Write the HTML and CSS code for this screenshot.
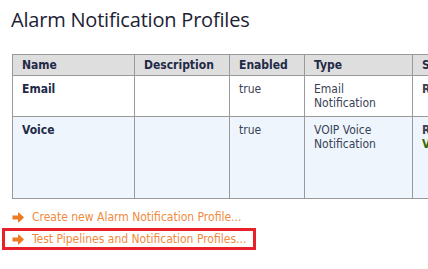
FILE: index.html
```html
<!DOCTYPE html>
<html>
<head>
<meta charset="utf-8">
<link rel="stylesheet" href="styles.css">
</head>
<body>
<h1 class="title">Alarm Notification Profiles</h1>
<table class="grid">
  <colgroup>
    <col class="c-name"><col class="c-desc"><col class="c-en"><col class="c-type"><col class="c-status">
  </colgroup>
  <thead>
    <tr><th>Name</th><th>Description</th><th>Enabled</th><th>Type</th><th>Status</th></tr>
  </thead>
  <tbody>
    <tr class="r1"><td class="b">Email</td><td></td><td>true</td><td>Email<br>Notification</td><td class="st">Running</td></tr>
    <tr class="r2"><td class="b">Voice</td><td></td><td>true</td><td>VOIP Voice<br>Notification</td><td class="st">Running<br><span class="st2">VoIP</span></td></tr>
  </tbody>
</table>
<div class="links">
  <div class="link"><svg class="arr" width="12" height="11" viewBox="0 0 12 11"><path d="M0.5 3.6H6V0.8Q6 0.2 6.6 0.6L11.6 5.1Q12 5.5 11.6 5.9L6.6 10.4Q6 10.8 6 10.2V7.4H0.5Z" fill="#ee7a22"/></svg><span>Create new Alarm Notification Profile...</span></div>
  <div class="link boxed"><svg class="arr" width="12" height="11" viewBox="0 0 12 11"><path d="M0.5 3.6H6V0.8Q6 0.2 6.6 0.6L11.6 5.1Q12 5.5 11.6 5.9L6.6 10.4Q6 10.8 6 10.2V7.4H0.5Z" fill="#ee7a22"/></svg><span>Test Pipelines and Notification Profiles...</span></div>
</div>
</body>
</html>
```
FILE: styles.css
```css
html, body { margin: 0; padding: 0; overflow: hidden; background: #fff; }
body { font-family: "DejaVu Sans Condensed", "Liberation Sans", sans-serif; font-size: 12px; color: #2b3550; width: 428px; height: 269px; }
.title { font-family: "Open Sans", "Noto Sans", sans-serif; font-weight: 400; font-size: 20px; letter-spacing: -0.2px; color: #1d2233; margin: 0; padding: 6px 0 0 11px; line-height: 28px; height: 48px; box-sizing: border-box; }
.grid { border-collapse: collapse; table-layout: fixed; margin-left: 12px; margin-top: 6px; width: 520px; }
.c-name { width: 122px; } .c-desc { width: 95px; } .c-en { width: 75px; } .c-type { width: 108px; } .c-status { width: 120px; }
.grid th, .grid td { border: 1px solid #9a9a9a; padding: 0 9px; text-align: left; vertical-align: top; line-height: 14px; }
.grid th { background: #dedede; height: 20px; vertical-align: middle; font-weight: bold; color: #1f2a47; white-space: nowrap; overflow: hidden; }
.grid td { padding-top: 6px; padding-bottom: 6px; color: #3a4257; }
.r1 td { height: 28px; }
.r2 td { height: 69px; background: #eef5fd; }
.grid td.b { font-weight: bold; color: #1f2a47; }
.st { color: #3f7d00; font-weight: bold; white-space: nowrap; }
.st2 { color: #2f6b00; }
.links { padding-top: 6px; }
.link { display: flex; align-items: center; gap: 8px; height: 24px; padding-left: 12px; color: #f08a3e; box-sizing: border-box; width: 255px; }
.boxed { margin-left: 2px; padding-left: 7px; border: 3px solid #e8202a; height: 22px; width: 254px; margin-top: -1px; }
.arr { flex: none; }
```
